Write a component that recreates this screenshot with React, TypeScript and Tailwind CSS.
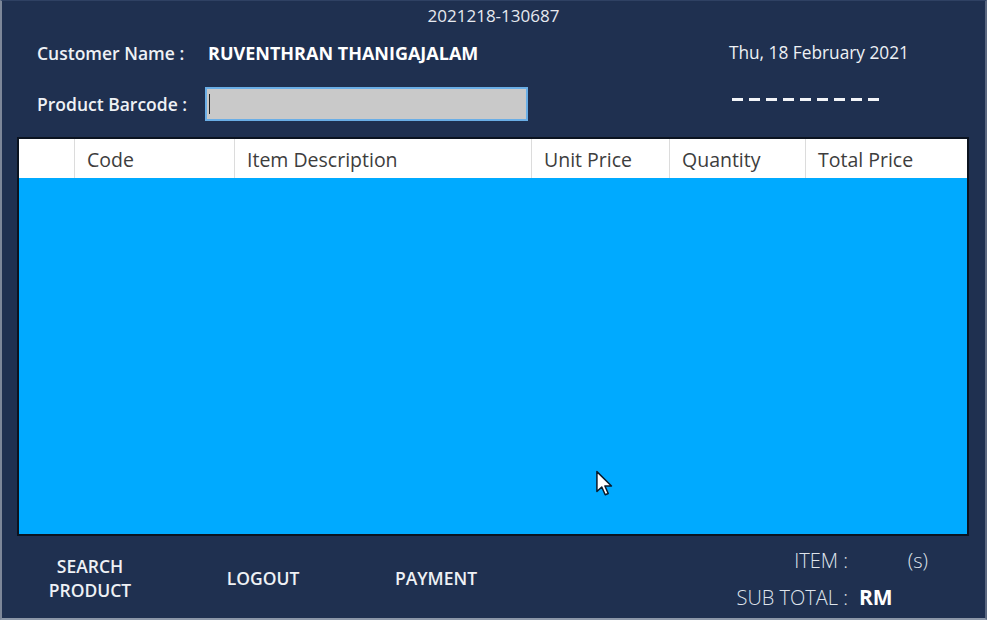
import React from "react";

const COLUMNS = [
  { label: "", width: "w-[56px]" },
  { label: "Code", width: "w-[160px]" },
  { label: "Item Description", width: "w-[297px]" },
  { label: "Unit Price", width: "w-[138px]" },
  { label: "Quantity", width: "w-[136px]" },
  { label: "Total Price", width: "flex-1" },
];

function Dashes() {
  return (
    <div className="flex gap-[6px]">
      {Array.from({ length: 9 }).map((_, i) => (
        <div key={i} className="h-[3px] w-[11px] bg-[#f2f4f8]" />
      ))}
    </div>
  );
}

function Pointer() {
  return (
    <svg
      className="absolute left-[576px] top-[331px]"
      width="20"
      height="28"
      viewBox="0 0 18 26"
      aria-hidden
    >
      <path
        d="M1.5 1.5 L1.5 20 L6 15.8 L9.2 23 L12 21.8 L8.9 14.8 L15 14.8 Z"
        fill="#ffffff"
        stroke="#0a1a2a"
        strokeWidth="1.4"
        strokeLinejoin="round"
      />
    </svg>
  );
}

export default function App() {
  return (
    <div
      className="flex h-[620px] w-[987px] flex-col overflow-hidden border-b-2 border-l-2 border-r-2 border-t border-b-[#8c97a8] border-l-[#7d8799] border-r-[#5a6780] border-t-[#2f4163] bg-[#1f3050] text-white"
      style={{ fontFamily: '"Open Sans", "Noto Sans", sans-serif' }}
    >
      <div className="flex h-[29px] shrink-0 items-center justify-center text-[17px] text-[#e6e9ef]">
        2021218-130687
      </div>

      <div className="flex h-[46px] shrink-0 items-center pl-[35px] pr-[76px]">
        <span className="w-[171px] text-[17.5px] font-semibold text-[#eef1f5]">Customer Name :</span>
        <span className="text-[18px] font-bold">RUVENTHRAN THANIGAJALAM</span>
        <span className="ml-auto text-[17.3px] text-[#eef1f5]">Thu, 18 February 2021</span>
      </div>

      <div className="mt-[11px] flex h-[34px] shrink-0 items-center pl-[35px] pr-[106px]">
        <span className="w-[168px] text-[17.5px] font-semibold text-[#eef1f5]">Product Barcode :</span>
        <div className="flex h-[34px] w-[323px] items-center border-2 border-[#6aaee6] bg-[#c9c9c9] pl-[2px]">
          <div className="h-[20px] w-px bg-[#222]" />
        </div>
        <div className="ml-auto mb-[10px]">
          <Dashes />
        </div>
      </div>

      <div className="relative ml-[15px] mr-[16px] mt-[16px] flex h-[399px] shrink-0 flex-col border-2 border-[#0b1320]">
        <div className="flex h-[39px] bg-white">
          {COLUMNS.map((col, i) => (
            <div
              key={i}
              className={`${col.width} flex items-center pl-[12px] pt-[3px] text-[19.5px] text-[#3d3d3d] ${i < COLUMNS.length - 1 ? "border-r border-[#dcdcdc]" : ""}`}
            >
              {col.label}
            </div>
          ))}
        </div>
        <div className="flex-1 bg-[#00aaff]" />
        <Pointer />
      </div>

      <div className="flex min-h-0 flex-1 pl-[18px]">
        <div className="flex items-center gap-[33px] pt-[2px]">
          {["SEARCH PRODUCT", "LOGOUT", "PAYMENT"].map((label) => (
            <div
              key={label}
              className="w-[140px] text-center text-[17.5px] font-semibold leading-[24px] text-[#eef1f5]"
            >
              {label === "SEARCH PRODUCT" ? (
                <>
                  SEARCH
                  <br />
                  PRODUCT
                </>
              ) : (
                label
              )}
            </div>
          ))}
        </div>
        <div className="ml-auto mr-[57px] mt-[6px] grid grid-cols-[auto_80px] grid-rows-[37px_37px] items-center text-[20px] font-light text-[#dfe4ec]">
          <span className="text-right">ITEM :</span>
          <span className="text-right">(s)</span>
          <span className="text-right">SUB TOTAL :</span>
          <span className="pl-[11px] text-[21px] font-bold text-white">RM</span>
        </div>
      </div>
    </div>
  );
}
